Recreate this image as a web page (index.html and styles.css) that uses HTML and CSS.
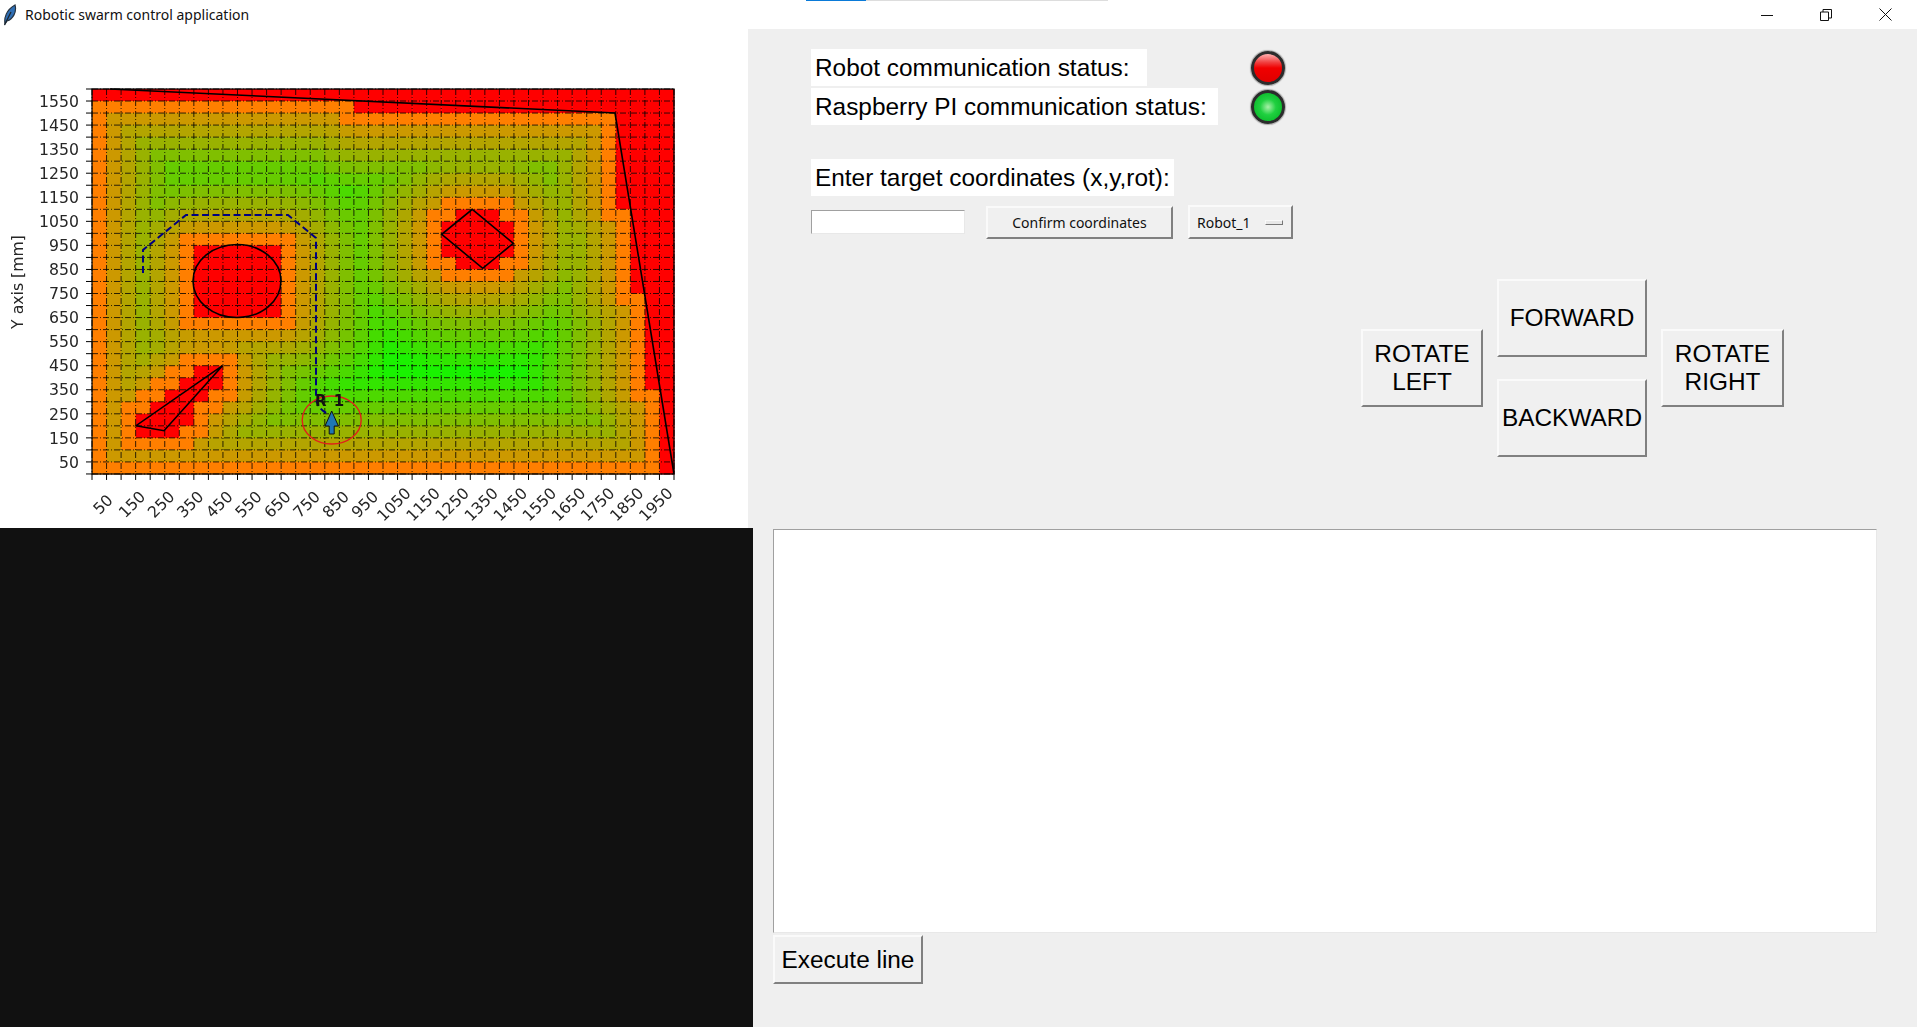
FILE: index.html
```html
<!DOCTYPE html>
<html lang="en">
<head>
    <meta charset="utf-8">
    <title>Robotic swarm control application</title>
    <link rel="stylesheet" href="styles.css">
</head>
<body>
    <div class="titlebar">
        <svg class="app-icon" width="14" height="22" viewBox="0 0 14 22">
            <path d="M2 20 C1 14 3 6 12 1 C14 8 10 15 4 17 Z" fill="#2f6fb5" stroke="#26323f" stroke-width="1.2"/>
            <path d="M1.5 21 L8 8" stroke="#1b2530" stroke-width="1.2" fill="none"/>
        </svg>
        <span class="app-title">Robotic swarm control application</span>
        <div class="win-progress"><div class="win-progress-done"></div></div>
        <div class="win-buttons">
            <svg width="12" height="12" viewBox="0 0 12 12"><path d="M0 6.5 H12" stroke="#111" fill="none"/></svg>
            <svg width="12" height="12" viewBox="0 0 12 12"><path d="M0.5 3 H8.5 V11.5 H0.5 Z M3 3 V0.5 H11.5 V9 H8.5" stroke="#111" fill="none"/></svg>
            <svg width="13" height="13" viewBox="0 0 13 13"><path d="M0.5 0.5 L12.5 12.5 M12.5 0.5 L0.5 12.5" stroke="#111" fill="none"/></svg>
        </div>
    </div>

    <div class="top-row">
        <div class="plot-panel">
            <svg id="plot" width="748" height="499" viewBox="0 29 748 499">
                <g id="cells"></g>
                <g id="grid"></g>
                <g class="obstacle">
                    <path d="M110 89 L615 113 L674 474"/>
                    <ellipse cx="237" cy="281" rx="44" ry="36.5"/>
                    <path d="M472.3 209.3 L513.3 243.3 L482.7 268.3 L441.7 234.3 Z"/>
                    <path d="M136 425.7 L164 430.7 L222.5 365.7 Z"/>
                </g>
                <path class="route" d="M143 273 V250 L186 215 H288 L316 238 V396 Q316 408 328 414"/>
                <ellipse class="robot-ring" cx="331.7" cy="420" rx="29.5" ry="24"/>
                <path class="robot-arrow" d="M331.7 411 L338.4 426 H334.2 V434 H329.2 V426 H325 Z"/>
                <text class="robot-name" x="330" y="406">R 1</text>
                <g id="ticks"></g>
                <rect class="frame" x="92" y="89" width="582" height="385"/>
                <text class="axis-name" transform="translate(23 282) rotate(-90)">Y axis [mm]</text>
            </svg>
        </div>
        <div class="control-panel">
            <div class="status">
                <span class="big-label">Robot communication status:&nbsp;&nbsp;</span>
                <div class="led led-red"></div>
                <span class="big-label">Raspberry PI communication status:&nbsp;</span>
                <div class="led led-green"></div>
            </div>
            <span class="big-label target-label">Enter target coordinates (x,y,rot):</span>
            <div class="target-row">
                <input class="target-entry" type="text">
                <button class="tk-button confirm" type="button">Confirm coordinates</button>
                <div class="tk-button robot-menu">Robot_1<span class="menu-bar"></span></div>
            </div>
            <div class="drive">
                <button class="tk-button drive-side" type="button">ROTATE<br>LEFT</button>
                <button class="tk-button" type="button">FORWARD</button>
                <button class="tk-button drive-side" type="button">ROTATE<br>RIGHT</button>
                <button class="tk-button drive-back" type="button">BACKWARD</button>
            </div>
        </div>
    </div>

    <div class="bottom-row">
        <div class="camera"></div>
        <div class="console">
            <textarea class="console-text"></textarea>
            <button class="tk-button execute" type="button">Execute line</button>
        </div>
    </div>
    <script src="plot.js"></script>
</body>
</html>
```

FILE: styles.css
```css
html, body {
    margin: 0;
    padding: 0;
}
body {
    width: 1917px;
    height: 1027px;
    overflow: hidden;
    background-color: #efefef;
    color: #000;
    font-family: "Liberation Sans", Arial, sans-serif;
    display: flex;
    flex-direction: column;
}

/* window title */
.titlebar {
    height: 29px;
    flex: none;
    background-color: #fff;
    display: flex;
    align-items: center;
    position: relative;
}
.app-icon {
    margin-left: 3px;
}
.app-title {
    margin-left: 8px;
    font-family: "Noto Sans", sans-serif;
    font-size: 14px;
    color: #111;
}
.win-progress {
    position: absolute;
    left: 806px;
    top: 0;
    width: 302px;
    height: 1px;
    background-color: #ddd;
}
.win-progress-done {
    width: 60px;
    height: 1px;
    background-color: #0a7ad8;
}
.win-buttons {
    margin-left: auto;
    margin-right: 25px;
    display: flex;
    align-items: center;
    gap: 47px;
}

/* upper half */
.top-row {
    height: 499px;
    flex: none;
    display: flex;
}
.plot-panel {
    width: 748px;
    flex: none;
    background-color: #fff;
}
#plot {
    display: block;
    filter: blur(0.45px);
}
.grid-line {
    stroke: #000;
    stroke-width: 1;
    stroke-opacity: 0.8;
    stroke-dasharray: 6 2 1 2;
}
.obstacle path, .obstacle ellipse {
    fill: none;
    stroke: #000;
    stroke-width: 1.6;
}
.route {
    fill: none;
    stroke: #000080;
    stroke-width: 2;
    stroke-dasharray: 7 3.5;
}
.robot-ring {
    fill: none;
    stroke: #e0201a;
    stroke-width: 1.4;
}
.robot-arrow {
    fill: #1f77b4;
    stroke: #111;
    stroke-width: 1;
}
.robot-name {
    font-family: "DejaVu Sans", sans-serif;
    font-size: 15px;
    font-weight: bold;
    text-anchor: middle;
    letter-spacing: 1px;
    fill: #111;
}
.tick {
    stroke: #000;
    stroke-width: 1;
}
.tick-label, .axis-name {
    font-family: "DejaVu Sans", sans-serif;
    font-size: 15.7px;
    fill: #262626;
}
.tick-label-y {
    text-anchor: end;
}
.tick-label-x {
    text-anchor: middle;
}
.axis-name {
    text-anchor: middle;
}
.frame {
    fill: none;
    stroke: #000;
    stroke-width: 1.2;
}

.control-panel {
    flex: 1;
    padding: 20px 0 0 63px;
    display: flex;
    flex-direction: column;
    align-items: flex-start;
}
.status {
    display: grid;
    grid-template-columns: 440px 34px;
    grid-auto-rows: 37px;
    row-gap: 2px;
    align-items: center;
}
.big-label {
    justify-self: start;
    height: 37px;
    line-height: 37px;
    padding: 0 4px;
    background-color: #fff;
    font-size: 24.4px;
    white-space: nowrap;
}
.led {
    width: 34px;
    height: 34px;
    box-sizing: border-box;
    border-radius: 50%;
    border: 3px solid #2c2c2c;
    box-shadow: 0 0 1px 1px #aaa;
}
.led-red {
    background: linear-gradient(#ffb0b0 0%, #f04040 30%, #f00000 50%, #e00000 100%);
}
.led-green {
    background: radial-gradient(circle, #a8f0a8 0%, #20d040 40%, #00b020 100%);
}
.target-label {
    margin-top: 34px;
}
.target-row {
    margin-top: 9px;
    height: 34px;
    display: flex;
    align-items: center;
    font-family: "Noto Sans", sans-serif;
}
.target-entry {
    width: 154px;
    height: 24px;
    box-sizing: border-box;
    margin: 0 21px 0 0;
    padding: 0;
    background-color: #fff;
    border: 1px solid;
    border-color: #a0a0a0 #e8e8e8 #e8e8e8 #a0a0a0;
}
.tk-button {
    box-sizing: border-box;
    padding: 0;
    background-color: #f0f0f0;
    color: #000;
    border: 2px solid;
    border-color: #fafafa #808080 #808080 #fafafa;
    font-family: "Liberation Sans", Arial, sans-serif;
    font-size: 24.4px;
}
.confirm, .robot-menu {
    font-family: "Noto Sans", sans-serif;
    font-size: 14px;
    color: #111;
}
.confirm {
    width: 187px;
    height: 33px;
    margin-right: 15px;
}
.robot-menu {
    width: 105px;
    height: 34px;
    padding-left: 7px;
    display: flex;
    align-items: center;
}
.menu-bar {
    width: 18px;
    height: 5px;
    margin-left: auto;
    margin-right: 8px;
    box-sizing: border-box;
    background-color: #e8e8e8;
    border: 1px solid;
    border-color: #fafafa #777 #777 #fafafa;
}
.drive {
    margin: 40px 0 0 550px;
    display: grid;
    grid-template-columns: 122px 150px 123px;
    grid-template-rows: 78px 78px;
    column-gap: 14px;
    row-gap: 22px;
}
.drive-side {
    grid-row: span 2;
    align-self: center;
    height: 78px;
    line-height: 28px;
}
.drive-back {
    grid-column: 2;
}

/* lower half */
.bottom-row {
    flex: 1;
    display: flex;
}
.camera {
    width: 753px;
    flex: none;
    background-color: #111;
}
.console {
    flex: 1;
    padding: 1px 0 0 20px;
    display: flex;
    flex-direction: column;
    align-items: flex-start;
}
.console-text {
    display: block;
    width: 1104px;
    height: 404px;
    box-sizing: border-box;
    margin: 0;
    padding: 0;
    resize: none;
    background-color: #fff;
    border: 1px solid;
    border-color: #a0a0a0 #e8e8e8 #e8e8e8 #a0a0a0;
}
.execute {
    width: 150px;
    height: 49px;
    margin-top: 2px;
}
```

FILE: plot.js
```js
var NS = 'http://www.w3.org/2000/svg';
var LEFT = 92, TOP = 89, CELL_W = 14.55, CELL_H = 12.03;
var COLS = 40, ROWS = 32;

function el(parent, name, attrs, text) {
    var node = document.createElementNS(NS, name);
    for (var key in attrs) node.setAttribute(key, attrs[key]);
    if (text) node.textContent = text;
    parent.appendChild(node);
}

// blocks of forbidden cells as [row from, row to, col from, col to]
var walls = [[0, 0, 0, 39], [1, 1, 18, 39], [2, 9, 36, 39], [10, 16, 37, 39], [17, 24, 38, 39], [25, 31, 39, 39]];
var circle = [[13, 18, 7, 12]];
var diamond = [[10, 10, 25, 27], [11, 13, 24, 28], [14, 14, 25, 27]];
var wedge = [[23, 23, 7, 8], [24, 24, 6, 8], [25, 25, 5, 7], [26, 26, 4, 6], [27, 27, 3, 6], [28, 28, 3, 5]];
var blocks = walls.concat(circle, diamond, wedge);

function isRed(r, c) {
    return blocks.some(function (b) {
        return r >= b[0] && r <= b[1] && c >= b[2] && c <= b[3];
    });
}

function distance(r, c) {
    var best = Math.min(c + 1, ROWS - r);
    blocks.forEach(function (b) {
        var dr = Math.max(b[0] - r, 0, r - b[1]);
        var dc = Math.max(b[2] - c, 0, c - b[3]);
        best = Math.min(best, Math.sqrt(dr * dr + dc * dc));
    });
    return best;
}

function cellColor(r, c) {
    if (isRed(r, c)) return '#ff0000';
    var d = distance(r, c);
    if (d < 1.5) return '#ff7f00';
    var t = Math.max(0, 1 - d / 10);
    return 'rgb(' + Math.round(255 * t) + ',' + Math.round(255 - 128 * t) + ',0)';
}

var cells = document.getElementById('cells');
for (var r = 0; r < ROWS; r++) {
    for (var c = 0; c < COLS; c++) {
        el(cells, 'rect', {
            x: LEFT + c * CELL_W, y: TOP + r * CELL_H,
            width: CELL_W + 0.5, height: CELL_H + 0.5,
            fill: cellColor(r, c)
        });
    }
}

var grid = document.getElementById('grid');
var ticks = document.getElementById('ticks');
var bottom = TOP + ROWS * CELL_H;
var right = LEFT + COLS * CELL_W;

for (var i = 0; i <= COLS; i++) {
    var x = LEFT + i * CELL_W;
    el(grid, 'line', { 'class': 'grid-line', x1: x, y1: TOP, x2: x, y2: bottom });
    el(ticks, 'line', { 'class': 'tick', x1: x, y1: bottom, x2: x, y2: bottom + 6 });
    if (i % 2 == 1) {
        var lx = x - 3, ly = 505;
        el(ticks, 'text', {
            'class': 'tick-label tick-label-x', x: lx, y: ly,
            'dominant-baseline': 'middle',
            transform: 'rotate(-45 ' + lx + ' ' + ly + ')'
        }, String(i * 50));
    }
}

for (var j = 0; j <= ROWS; j++) {
    var y = bottom - j * CELL_H;
    el(grid, 'line', { 'class': 'grid-line', x1: LEFT, y1: y, x2: right, y2: y });
    el(ticks, 'line', { 'class': 'tick', x1: LEFT - 6, y1: y, x2: LEFT, y2: y });
    if (j % 2 == 1) {
        el(ticks, 'text', {
            'class': 'tick-label tick-label-y', x: 79, y: y + 5.7
        }, String(j * 50));
    }
}
```
